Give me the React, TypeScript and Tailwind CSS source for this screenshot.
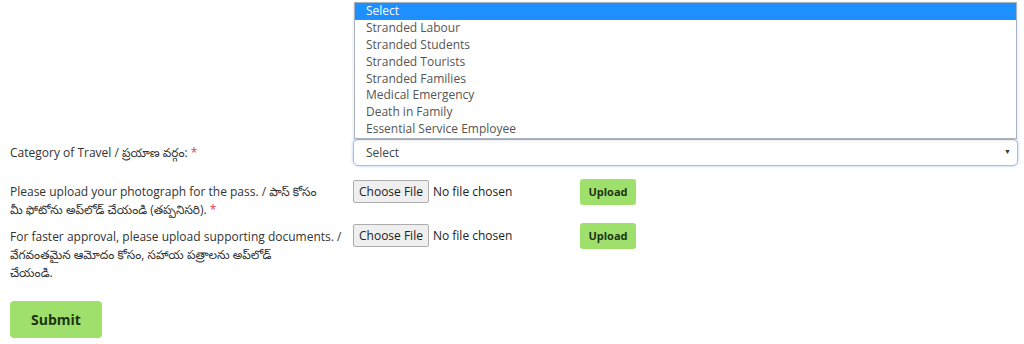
const OPTIONS = [
  "Select",
  "Stranded Labour",
  "Stranded Students",
  "Stranded Tourists",
  "Stranded Families",
  "Medical Emergency",
  "Death in Family",
  "Essential Service Employee",
];

const FONT = { fontFamily: '"Open Sans", "Noto Sans", "Noto Sans Telugu", sans-serif' };

function Req() {
  return <span className="text-[#e0405a]">&nbsp;*</span>;
}

function FileRow() {
  return (
    <div className="flex items-start">
      <div className="flex w-[227px] items-center gap-[4px] pt-px">
        <span className="rounded-[2px] border border-[#adadad] bg-[#efefef] px-[5px] py-[2px] text-[12px] leading-[17px] text-[#222]">
          Choose File
        </span>
        <span className="text-[12px] text-[#222]">No file chosen</span>
      </div>
      <button className="h-[26px] w-[56px] rounded-[3px] bg-[#9fe06c] text-[11px] font-bold text-[#1d3310]">
        Upload
      </button>
    </div>
  );
}

export default function App() {
  return (
    <div className="h-[344px] w-[1024px] bg-white text-[12px] text-[#333]" style={FONT}>
      <div className="pl-[10px] pt-[139px]">
        <div className="grid grid-cols-[343px_665px] gap-y-[14px]">
          <div className="h-[27px] leading-[27px]">
            Category of Travel / ప్రయాణ వర్గం:<Req />
          </div>
          <div className="relative">
            <ul className="absolute bottom-full left-px right-px border border-[#a9b4c2] bg-white shadow-[0_1px_3px_rgba(0,0,0,0.15)]">
              {OPTIONS.map((o, i) => (
                <li
                  key={o}
                  className={
                    i === 0
                      ? "h-[16.85px] bg-[#1e8fff] pl-[11px] leading-[16.85px] text-white"
                      : "h-[16.85px] pl-[11px] leading-[16.85px] text-[#555]"
                  }
                >
                  {o}
                </li>
              ))}
            </ul>
            <div className="flex h-[27px] items-center justify-between rounded-[5px] border border-[#9cc3ec] pl-[12px] pr-[6px] text-[#444] shadow-[0_0_3px_rgba(102,160,230,0.6)]">
              <span>Select</span>
              <span className="text-[7px] text-[#333]">▼</span>
            </div>
          </div>

          <div className="pt-[3px] leading-[18px]">
            Please upload your photograph for the pass. / పాస్ కోసం
            <br />
            మీ ఫోటోను అప్‌లోడ్ చేయండి (తప్పనిసరి).<Req />
          </div>
          <div className="-mt-px">
            <FileRow />
          </div>

          <div className="-mt-[8px] pt-[3px] leading-[17.8px]">
            For faster approval, please upload supporting documents. /
            <br />
            వేగవంతమైన ఆమోదం కోసం, సహాయ పత్రాలను అప్‌లోడ్
            <br />
            చేయండి.
          </div>
          <div className="-mt-[10px]">
            <FileRow />
          </div>
        </div>
        <button className="mt-[20px] h-[37px] w-[92px] rounded-[4px] bg-[#9fe06c] text-[14px] font-bold text-[#1d3310]">
          Submit
        </button>
      </div>
    </div>
  );
}
